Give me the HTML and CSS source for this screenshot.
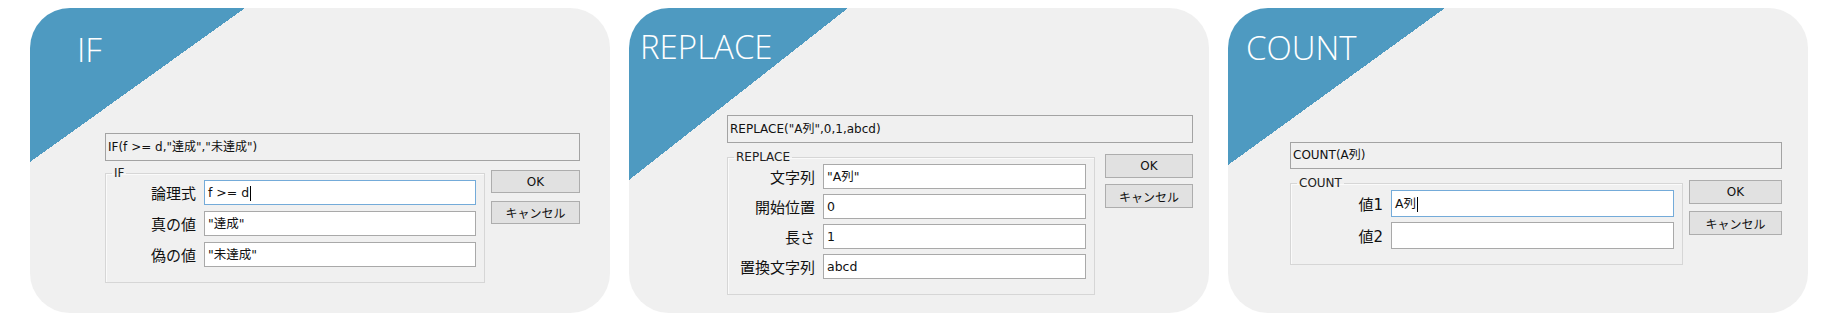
FILE: index.html
```html
<!DOCTYPE html>
<html>
	<head>
		<meta charset="UTF-8">
		<title>関数ダイアログ</title>
		<link rel="stylesheet" href="styles.css">
	</head>
	<body>
		<div class="board">
			<div class="card card-if">
				<h2 class="title">IF</h2>
				<div class="dialog">
					<div class="formula">IF(f &gt;= d,"達成","未達成")</div>
					<div class="dialog-body">
						<fieldset class="group">
							<legend>IF</legend>
							<div class="row">
								<span class="label">論理式</span>
								<div class="field focus">f &gt;= d<span class="caret"></span></div>
							</div>
							<div class="row">
								<span class="label">真の値</span>
								<div class="field">"達成"</div>
							</div>
							<div class="row">
								<span class="label">偽の値</span>
								<div class="field">"未達成"</div>
							</div>
						</fieldset>
						<div class="buttons">
							<button>OK</button>
							<button>キャンセル</button>
						</div>
					</div>
				</div>
			</div>

			<div class="card card-replace">
				<h2 class="title">REPLACE</h2>
				<div class="dialog">
					<div class="formula">REPLACE("A列",0,1,abcd)</div>
					<div class="dialog-body">
						<fieldset class="group">
							<legend>REPLACE</legend>
							<div class="row">
								<span class="label">文字列</span>
								<div class="field">"A列"</div>
							</div>
							<div class="row">
								<span class="label">開始位置</span>
								<div class="field">0</div>
							</div>
							<div class="row">
								<span class="label">長さ</span>
								<div class="field">1</div>
							</div>
							<div class="row">
								<span class="label">置換文字列</span>
								<div class="field">abcd</div>
							</div>
						</fieldset>
						<div class="buttons">
							<button>OK</button>
							<button>キャンセル</button>
						</div>
					</div>
				</div>
			</div>

			<div class="card card-count">
				<h2 class="title">COUNT</h2>
				<div class="dialog">
					<div class="formula">COUNT(A列)</div>
					<div class="dialog-body">
						<fieldset class="group">
							<legend>COUNT</legend>
							<div class="row">
								<span class="label">値1</span>
								<div class="field focus">A列<span class="caret"></span></div>
							</div>
							<div class="row">
								<span class="label">値2</span>
								<div class="field"></div>
							</div>
						</fieldset>
						<div class="buttons">
							<button>OK</button>
							<button>キャンセル</button>
						</div>
					</div>
				</div>
			</div>
		</div>
	</body>
</html>
```

FILE: styles.css
```css
body {
	margin: 0;
	background: #fff;
	font-family: "DejaVu Sans", "Noto Sans CJK JP", sans-serif;
	color: #111;
}
.board {
	display: grid;
	grid-template-columns: repeat(3, 580px);
	column-gap: 19px;
	padding: 8px 0 0 30px;
}

/* each card has its own offsets, the dialogs were pasted in by hand */
.card {
	height: 305px;
	border-radius: 40px;
	background-color: #f0f0f0;
	background-image: linear-gradient(to bottom right, #4e9ac1 50%, transparent 50%);
	background-repeat: no-repeat;
	background-size: var(--tri-w) var(--tri-h);
	overflow: hidden;
}
.card-if {
	--tri-w: 215px; --tri-h: 154px;
	--title-x: 47px; --title-y: 22px;
	--dlg-x: 75px; --dlg-y: 125px; --dlg-w: 475px;
	--formula-h: 28px; --body-gap: 6px;
	--btn-w: 89px; --btn-h: 23px; --btn-gap: 8px; --col-gap: 6px;
	--lbl-w: 90px; --field-h: 25px; --row-gap: 6px;
}
.card-replace {
	--tri-w: 219px; --tri-h: 172px;
	--title-x: 11px; --title-y: 19px;
	--dlg-x: 98px; --dlg-y: 107px; --dlg-w: 466px;
	--formula-h: 28px; --body-gap: 8px;
	--btn-w: 88px; --btn-h: 24px; --btn-gap: 6px; --col-gap: 10px;
	--lbl-w: 87px; --field-h: 25px; --row-gap: 5px;
}
.card-count {
	--tri-w: 217px; --tri-h: 157px;
	--title-x: 18px; --title-y: 20px;
	--dlg-x: 62px; --dlg-y: 134px; --dlg-w: 492px;
	--formula-h: 27px; --body-gap: 8px;
	--btn-w: 93px; --btn-h: 24px; --btn-gap: 7px; --col-gap: 6px;
	--lbl-w: 92px; --field-h: 27px; --row-gap: 5px;
}

.title {
	margin: var(--title-y) 0 0 var(--title-x);
	height: 40px;
	font-family: "Open Sans", sans-serif;
	font-weight: 300;
	font-size: 33px;
	line-height: 40px;
	color: #fff;
}

.dialog {
	width: var(--dlg-w);
	margin: calc(var(--dlg-y) - var(--title-y) - 40px) 0 0 var(--dlg-x);
	font-size: 12px;
}
.formula {
	box-sizing: border-box;
	height: var(--formula-h);
	line-height: calc(var(--formula-h) - 2px);
	padding-left: 2px;
	border: 1px solid #a3a3a3;
	background: #f0f0f0;
	white-space: nowrap;
}
.dialog-body {
	display: grid;
	grid-template-columns: 1fr var(--btn-w);
	column-gap: var(--col-gap);
	align-items: start;
	margin-top: var(--body-gap);
}

.group {
	margin: 0;
	padding: 1px 8px 15px 0;
	min-width: 0;
	border: 1px solid #d6d6d6;
	box-shadow: inset 1px 1px 0 #fafafa;
	display: flex;
	flex-direction: column;
	gap: var(--row-gap);
}
.group legend {
	margin-left: 6px;
	padding: 0 2px;
	font-size: 12px;
	line-height: 12px;
	color: #222;
}
.row {
	display: grid;
	grid-template-columns: var(--lbl-w) 1fr;
	column-gap: 8px;
	align-items: center;
	height: var(--field-h);
}
.label {
	text-align: right;
	font-size: 15px;
	white-space: nowrap;
}
.field {
	box-sizing: border-box;
	height: var(--field-h);
	line-height: calc(var(--field-h) - 2px);
	padding-left: 3px;
	border: 1px solid #a9a9a9;
	background: #fff;
	font-size: 12.5px;
	white-space: nowrap;
}
.field.focus {
	border-color: #74abd9;
}
.caret {
	display: inline-block;
	width: 1px;
	height: 15px;
	margin-left: 1px;
	background: #000;
	vertical-align: middle;
}

.buttons {
	display: flex;
	flex-direction: column;
	gap: var(--btn-gap);
	margin-top: 3px;
}
.buttons button {
	height: var(--btn-h);
	padding: 0;
	border: 1px solid #adadad;
	background: #e1e1e1;
	font-family: inherit;
	font-size: 12px;
	color: #111;
}
```
